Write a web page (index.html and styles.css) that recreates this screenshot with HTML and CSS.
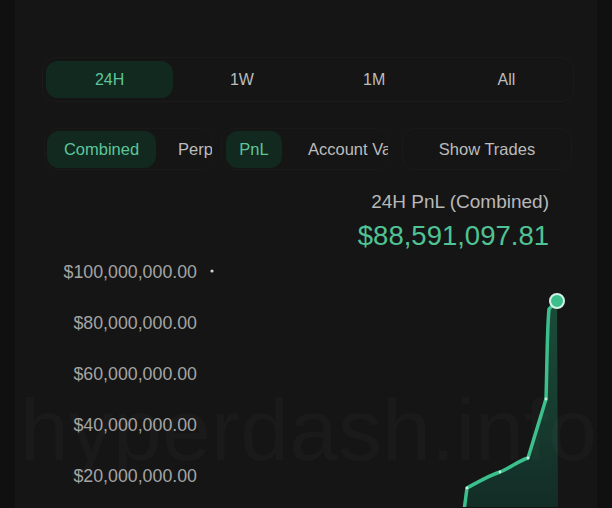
FILE: index.html
```html
<!DOCTYPE html>
<html>
  <head>
    <link rel="stylesheet" href="styles.css">
  </head>
  <body>
    <div class="card">
      <div class="tabs">
        <div class="tab active">24H</div>
        <div class="tab">1W</div>
        <div class="tab">1M</div>
        <div class="tab">All</div>
      </div>

      <div class="filters">
        <div class="seg seg-type">
          <div class="seg-btn active btn-combined">Combined</div>
          <div class="seg-btn">Perps</div>
        </div>
        <div class="seg seg-metric">
          <div class="seg-btn active btn-pnl">PnL</div>
          <div class="seg-btn">Account Value</div>
        </div>
        <div class="trades-btn">Show Trades</div>
      </div>

      <div class="headline">
        <div class="headline-title">24H PnL (Combined)</div>
        <div class="headline-value">$88,591,097.81</div>
      </div>

      <div class="chart">
        <div class="yaxis">
          <div class="ylabel">$100,000,000.00</div>
          <div class="ylabel">$80,000,000.00</div>
          <div class="ylabel">$60,000,000.00</div>
          <div class="ylabel">$40,000,000.00</div>
          <div class="ylabel">$20,000,000.00</div>
        </div>
        <svg class="plot" viewBox="197 259 399 249" width="399" height="249">
          <defs>
            <linearGradient id="fill" x1="0" y1="0" x2="0" y2="1">
              <stop offset="0" stop-color="#1d5a43"/>
              <stop offset="1" stop-color="#12322a"/>
            </linearGradient>
          </defs>
          <circle cx="212" cy="272" r="1.6" fill="#d0d0d0"/>
          <path d="M464 512 L467 489 C480 482 490 476 500 473 C510 469 518 462 528 459 L546 400 C547 370 547 330 549 310 L557 302 L558 512 Z" fill="url(#fill)" opacity="0.8"/>
          <path d="M464 512 L467 489 C480 482 490 476 500 473 C510 469 518 462 528 459 L546 400 C547 370 547 330 549 310 L557 302" fill="none" stroke="#3bbf8c" stroke-width="3.5" stroke-linejoin="round" stroke-linecap="round"/>
          <circle cx="467" cy="489" r="1.4" fill="#c9efe0"/>
          <circle cx="500" cy="473" r="1.4" fill="#c9efe0"/>
          <circle cx="528" cy="459" r="1.4" fill="#c9efe0"/>
          <circle cx="546" cy="400" r="1.4" fill="#c9efe0"/>
          <circle cx="557" cy="302" r="7" fill="#3bbf8c" stroke="#d6f2e7" stroke-width="2"/>
        </svg>
      </div>

      <div class="watermark">hyperdash.info</div>
    </div>
  </body>
</html>
```

FILE: styles.css
```css
* {
  box-sizing: border-box;
}
body {
  margin: 0;
  background-color: #101010;
  font-family: "Liberation Sans", Arial, sans-serif;
  overflow: hidden;
}
.card {
  position: relative;
  margin: 0 15px;
  height: 508px;
  padding-top: 57px;
  background-color: #151515;
  overflow: hidden;
}
.tabs {
  display: grid;
  grid-template-columns: repeat(4, 1fr);
  gap: 5px;
  margin-left: 27px;
  width: 532px;
  height: 45px;
  padding: 3px;
  border: 1px solid #1b1b1b;
  border-radius: 13px;
}
.tab {
  display: flex;
  align-items: center;
  justify-content: center;
  color: #bcbcbc;
  font-size: 16px;
  border-radius: 12px;
}
.tab.active {
  background-color: #12291f;
  color: #5cc59a;
}
.filters {
  display: flex;
  align-items: center;
  margin-top: 26px;
  margin-left: 29px;
  height: 42px;
}
.seg {
  display: flex;
  align-items: center;
  height: 42px;
  padding: 2px;
  border: 1px solid #191919;
  border-radius: 13px;
  overflow: hidden;
  white-space: nowrap;
}
.seg-type {
  width: 169px;
}
.seg-metric {
  width: 168px;
  margin-left: 8px;
}
.seg-btn {
  display: flex;
  align-items: center;
  justify-content: center;
  flex-shrink: 0;
  height: 37px;
  padding: 0 22px 0 22px;
  color: #bcbcbc;
  font-size: 16.5px;
  border-radius: 12px;
}
.seg-btn.active {
  background-color: #12291f;
  color: #5cc59a;
}
.btn-combined {
  width: 109px;
  padding: 0;
}
.btn-pnl {
  width: 56px;
  padding: 0;
  margin-left: 2px;
}
.seg-metric .seg-btn:last-child {
  padding-left: 26px;
}
.trades-btn {
  display: flex;
  align-items: center;
  justify-content: center;
  width: 170px;
  height: 42px;
  margin-left: 13px;
  border: 1px solid #1a1a1a;
  border-radius: 13px;
  color: #bcbcbc;
  font-size: 16.5px;
}
.headline {
  margin-top: 20px;
  margin-right: 48px;
  text-align: right;
}
.headline-title {
  line-height: 24px;
  font-size: 19px;
  color: #b8b8b8;
}
.headline-value {
  line-height: 44px;
  font-size: 27.5px;
  color: #4fc394;
}
.chart {
  display: flex;
}
.yaxis {
  display: flex;
  flex-direction: column;
  gap: 23px;
  width: 182px;
  text-align: right;
}
.ylabel {
  line-height: 28px;
  font-size: 17.8px;
  color: #a4a4a4;
}
.plot {
  display: block;
  flex-shrink: 0;
}
.watermark {
  position: absolute;
  left: 5px;
  top: 380px;
  font-size: 88px;
  line-height: 100px;
  color: rgba(255, 255, 255, 0.022);
  white-space: nowrap;
  pointer-events: none;
}
```
